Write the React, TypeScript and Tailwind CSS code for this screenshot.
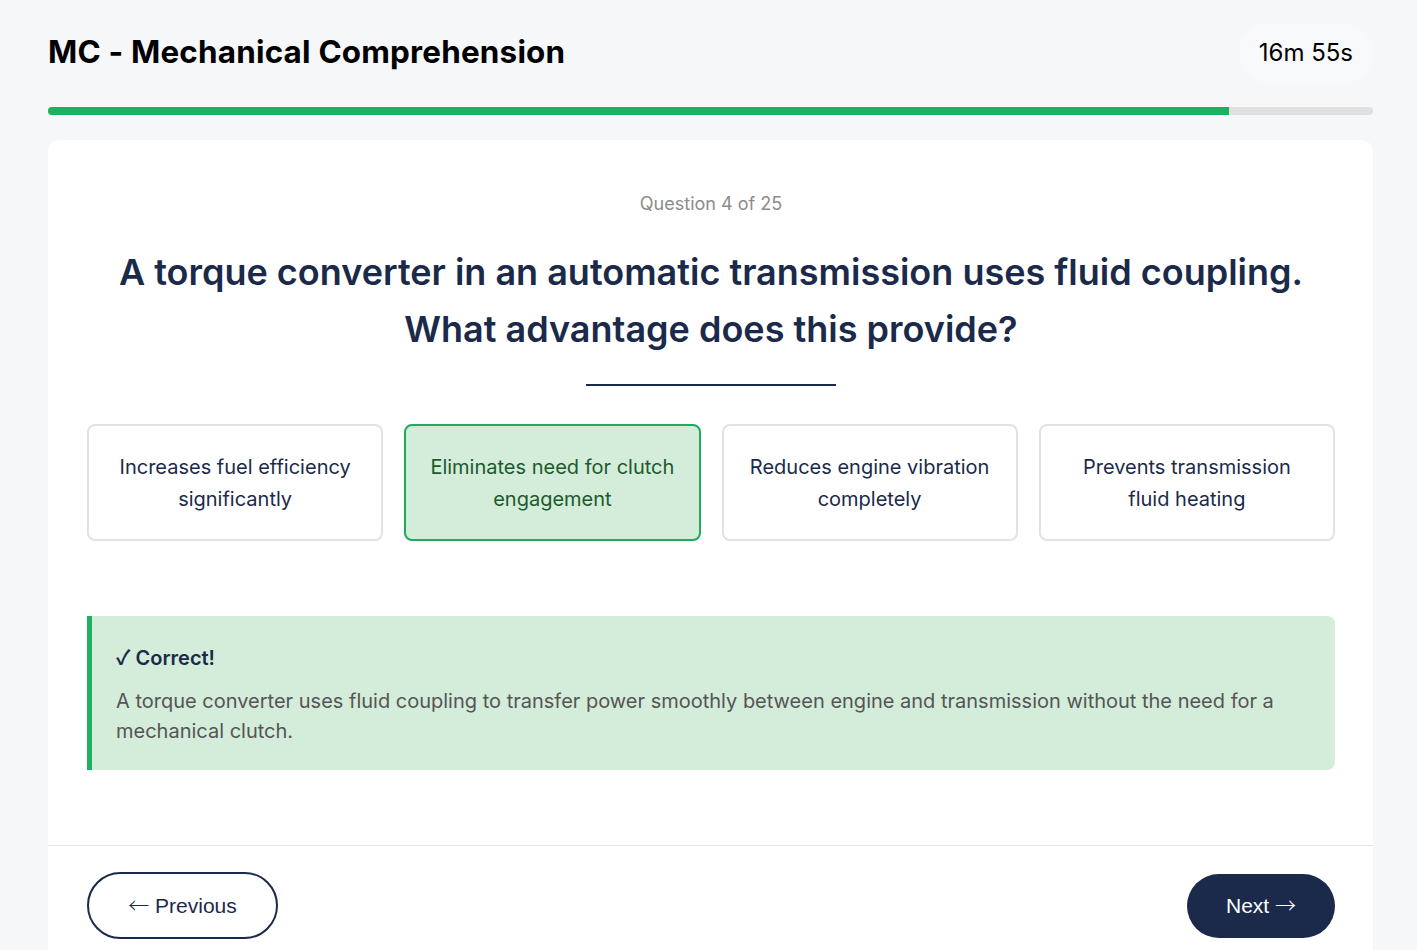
const navy = 'text-[#1b2a4a]';

const options = [
  { text: 'Increases fuel efficiency significantly', selected: false },
  { text: 'Eliminates need for clutch engagement', selected: true },
  { text: 'Reduces engine vibration completely', selected: false },
  { text: 'Prevents transmission fluid heating', selected: false },
];

function OptionCard({ text, selected }: { text: string; selected: boolean }) {
  return (
    <div
      className={
        selected
          ? 'flex h-[117px] items-center justify-center rounded-lg border-2 border-[#22a95c] bg-[#d4ecda] px-5 text-center text-[20px] leading-[32px] text-[#1c5a2c]'
          : 'flex h-[117px] items-center justify-center rounded-lg border-2 border-[#e2e2e2] bg-white px-5 text-center text-[20px] leading-[32px] text-[#1b2a4a]'
      }
    >
      {text}
    </div>
  );
}

export default function App() {
  return (
    <div className="min-h-[950px] bg-[#f6f7f9] font-['Inter',sans-serif]">
      <div className="ml-[48px] w-[1325px]">
        <header className="flex h-[107px] items-center justify-between pb-[2px]">
          <h1 className="text-[31.4px] font-bold tracking-[0.2px] text-black">
            MC - Mechanical Comprehension
          </h1>
          <div className="rounded-full bg-[#f8f9fa] px-5 py-3 text-[24px] text-black">16m 55s</div>
        </header>

        <div className="h-2 w-full overflow-hidden rounded-full bg-[#e0e0e0]">
          <div className="h-full bg-[#1db060]" style={{ width: '89.1%' }} />
        </div>

        <main className="mt-[25px] rounded-t-xl bg-white">
          <div className="pl-[39px] pr-[38px] pt-[51px] pb-[75px]">
            <p className="text-center text-[18px] leading-[26px] text-[#8c8c8c]">Question 4 of 25</p>
            <h2 className={`mt-[27px] text-center text-[36px] font-semibold leading-[57px] ${navy}`}>
              A torque converter in an automatic transmission uses fluid coupling.
              <br />
              What advantage does this provide?
            </h2>
            <div className="mx-auto mt-[26px] h-[2px] w-[250px] bg-[#1b2a4a]" />

            <div className="mt-[38px] grid grid-cols-4 gap-[21px]">
              {options.map((o) => (
                <OptionCard key={o.text} text={o.text} selected={o.selected} />
              ))}
            </div>

            <div className="mt-[75px] rounded-r-lg border-l-[5px] border-[#1db060] bg-[#d4ecda] pt-[27px] pb-[24px] pl-[24px] pr-[40px]">
              <p className={`text-[20px] font-semibold leading-[28px] ${navy}`}>
                <span className="font-['Noto_Sans_CJK_SC',sans-serif] font-bold">✓</span> Correct!
              </p>
              <p className="mt-[14px] text-[20px] leading-[30px] text-[#555555]">
                A torque converter uses fluid coupling to transfer power smoothly between engine and transmission without
                the need for a mechanical clutch.
              </p>
            </div>
          </div>

          <footer className="flex items-center justify-between border-t border-[#e6e6e6] pl-[39px] pr-[38px] pt-[26px] pb-[20px] font-['Liberation_Sans',sans-serif]">
            <button className="h-[67px] w-[191px] rounded-full border-2 border-[#1b2a4a] bg-white text-[21px] text-[#1b2a4a]">
              <span className="font-['Noto_Sans_CJK_SC',sans-serif] font-light">←</span> Previous
            </button>
            <button className="h-[64px] w-[148px] rounded-full bg-[#1b2a4a] text-[21px] text-white">
              Next <span className="font-['Noto_Sans_CJK_SC',sans-serif] font-light">→</span>
            </button>
          </footer>
        </main>
      </div>
    </div>
  );
}
